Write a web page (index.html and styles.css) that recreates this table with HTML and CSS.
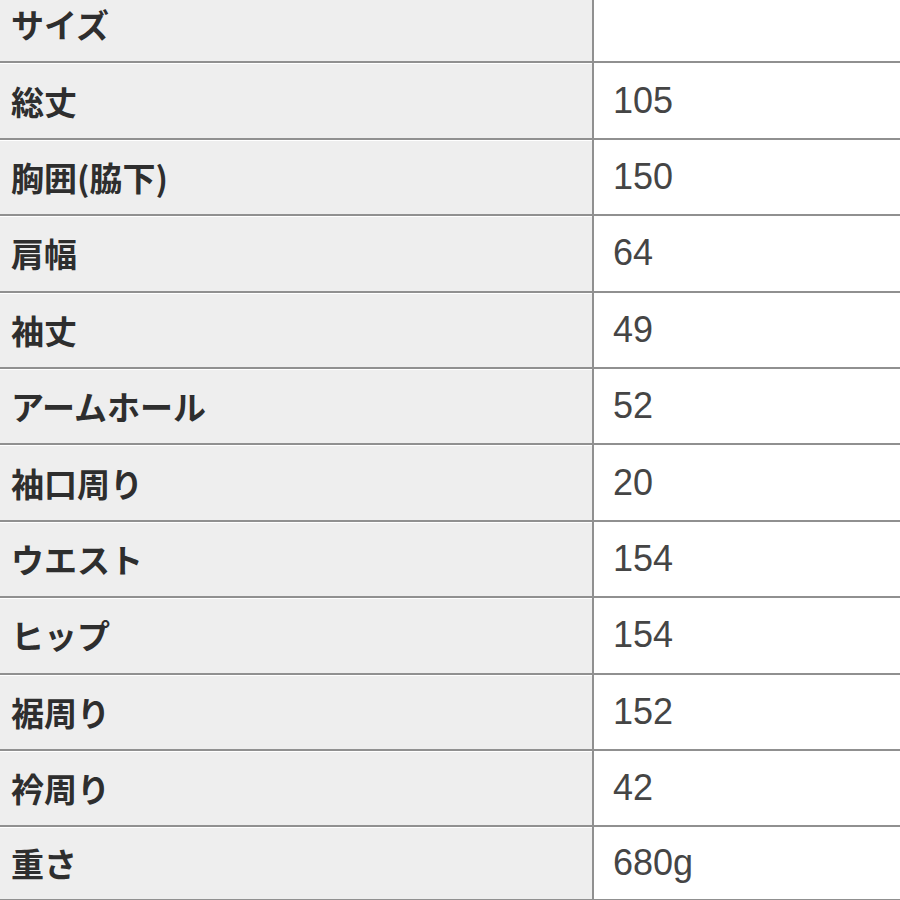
FILE: index.html
```html
<!DOCTYPE html>
<html lang="ja">
<head>
<meta charset="utf-8">
<link rel="stylesheet" href="styles.css">
</head>
<body>
<table class="spec">
<tbody>
<tr><th>サイズ</th><td></td></tr>
<tr><th>総丈</th><td>105</td></tr>
<tr><th>胸囲(脇下)</th><td>150</td></tr>
<tr><th>肩幅</th><td>64</td></tr>
<tr><th>袖丈</th><td>49</td></tr>
<tr><th>アームホール</th><td>52</td></tr>
<tr><th>袖口周り</th><td>20</td></tr>
<tr><th>ウエスト</th><td>154</td></tr>
<tr><th>ヒップ</th><td>154</td></tr>
<tr><th>裾周り</th><td>152</td></tr>
<tr><th>衿周り</th><td>42</td></tr>
<tr class="last"><th>重さ</th><td>680g</td></tr>
</tbody>
</table>
</body>
</html>
```
FILE: styles.css
```css
html, body {
  margin: 0;
  padding: 0;
  background: #ffffff;
  overflow: hidden;
}
.spec {
  width: 920px;
  margin-top: -15px;
  margin-left: -2px;
  border-collapse: collapse;
  table-layout: fixed;
}
.spec tr {
  height: 76.4px;
}
.spec tr.last {
  height: 74px;
}
.spec th,
.spec td {
  border: 2px solid #909090;
  padding: 0;
  vertical-align: middle;
}
.spec th {
  width: 581px;
  background: #eeeeee;
  text-align: left;
  padding-left: 11px;
  font-family: "Noto Sans CJK JP", "Liberation Sans", sans-serif;
  font-weight: 700;
  font-size: 33px;
  color: #2e2e2e;
  box-shadow: inset 0 1px 0 #ffffff;
}
.spec td {
  background: #ffffff;
  padding-left: 19px;
  font-family: "Liberation Sans", "Noto Sans CJK JP", sans-serif;
  font-size: 36px;
  color: #454545;
}
```
